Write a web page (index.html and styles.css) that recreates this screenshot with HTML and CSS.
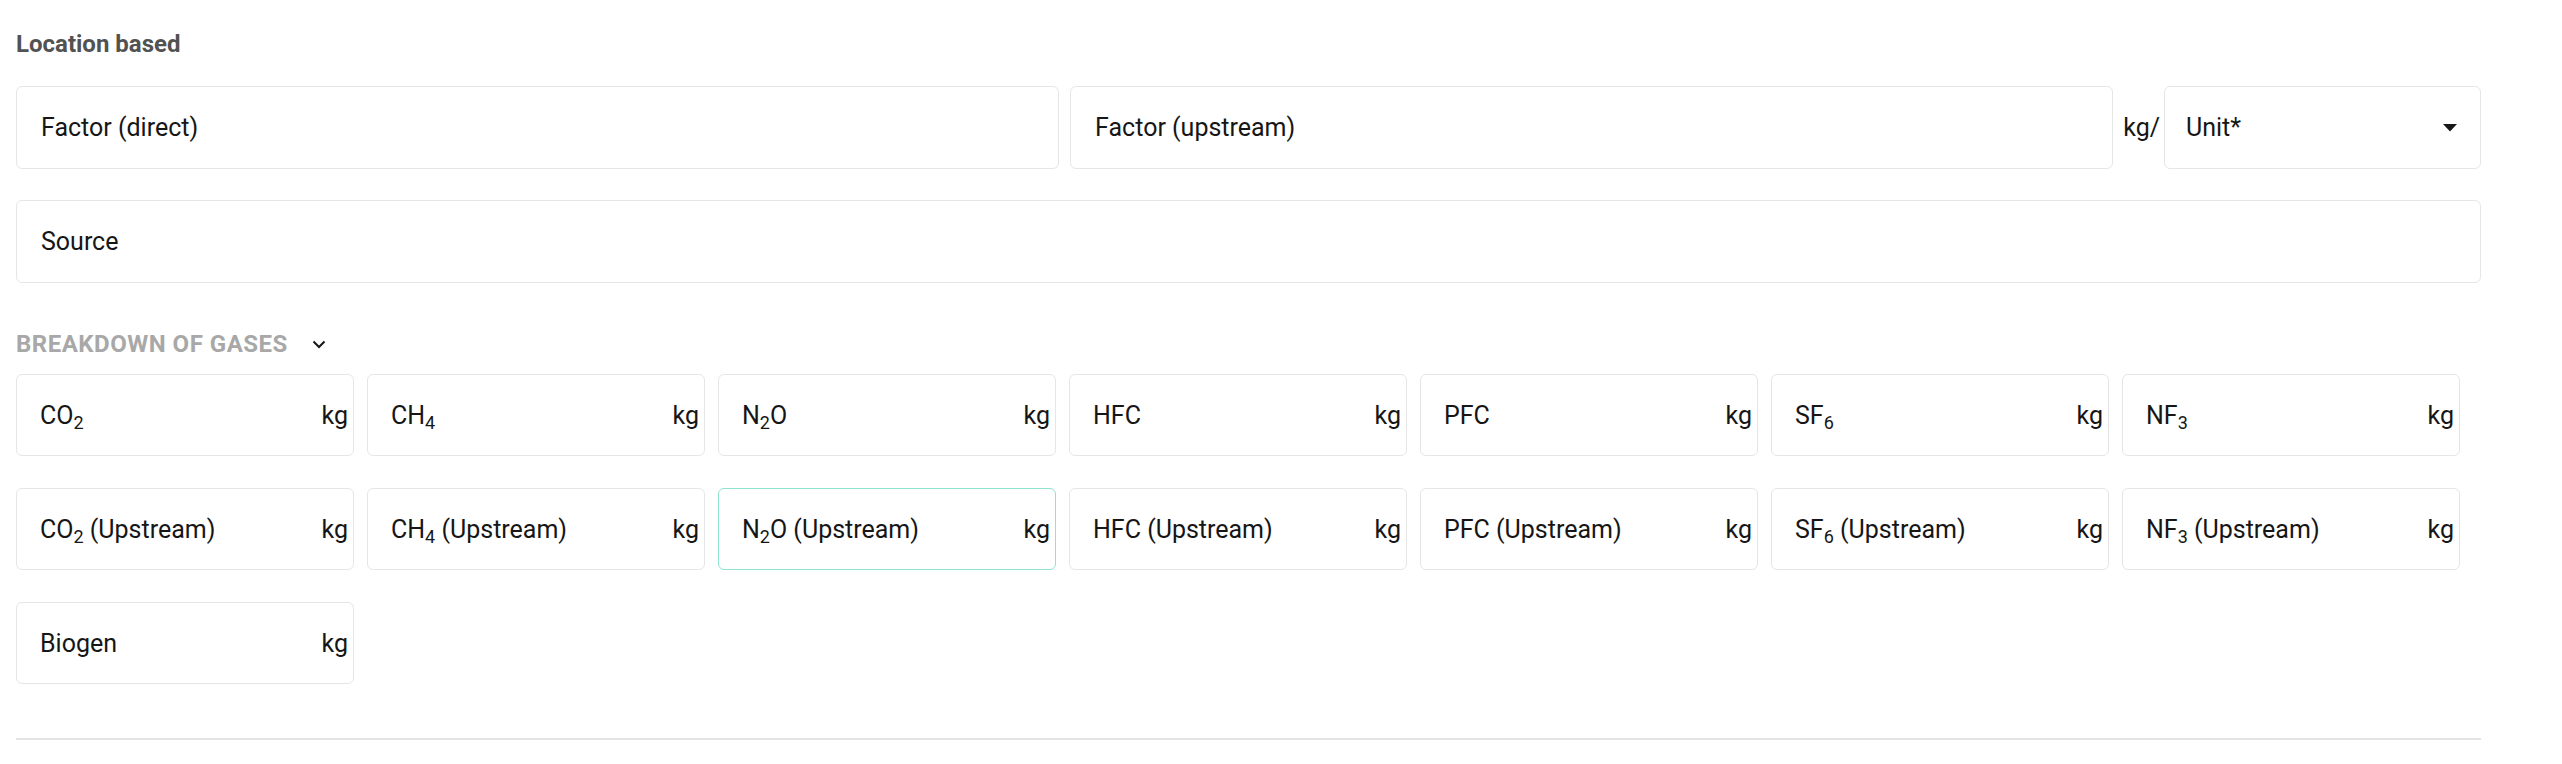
FILE: index.html
```html
<!DOCTYPE html>
<html lang="en">
<head>
<meta charset="utf-8">
<title>Location based</title>
<link rel="stylesheet" href="styles.css">
</head>
<body>
<div class="page">
  <h2 class="title">Location based</h2>

  <div class="row-top">
    <div class="field grow"><span class="label">Factor (direct)</span></div>
    <div class="field grow"><span class="label">Factor (upstream)</span></div>
    <span class="per">kg/</span>
    <div class="field select">
      <span class="label">Unit*</span>
      <svg class="caret" width="14" height="8" viewBox="0 0 14 8"><path d="M0 0 H14 L7 7.5 Z" fill="#161616"/></svg>
    </div>
  </div>

  <div class="field source"><span class="label">Source</span></div>

  <div class="section-head">
    <span class="section-title">Breakdown of gases</span>
    <svg class="chev" width="14" height="9" viewBox="0 0 14 9"><path d="M1.5 1.5 L7 7 L12.5 1.5" fill="none" stroke="#161616" stroke-width="2"/></svg>
  </div>

  <div class="gases">
    <div class="field gas"><span class="label">CO<sub>2</sub></span><span class="unit">kg</span></div>
    <div class="field gas"><span class="label">CH<sub>4</sub></span><span class="unit">kg</span></div>
    <div class="field gas"><span class="label">N<sub>2</sub>O</span><span class="unit">kg</span></div>
    <div class="field gas"><span class="label">HFC</span><span class="unit">kg</span></div>
    <div class="field gas"><span class="label">PFC</span><span class="unit">kg</span></div>
    <div class="field gas"><span class="label">SF<sub>6</sub></span><span class="unit">kg</span></div>
    <div class="field gas"><span class="label">NF<sub>3</sub></span><span class="unit">kg</span></div>

    <div class="field gas"><span class="label">CO<sub>2</sub> (Upstream)</span><span class="unit">kg</span></div>
    <div class="field gas"><span class="label">CH<sub>4</sub> (Upstream)</span><span class="unit">kg</span></div>
    <div class="field gas focused"><span class="label">N<sub>2</sub>O (Upstream)</span><span class="unit">kg</span></div>
    <div class="field gas"><span class="label">HFC (Upstream)</span><span class="unit">kg</span></div>
    <div class="field gas"><span class="label">PFC (Upstream)</span><span class="unit">kg</span></div>
    <div class="field gas"><span class="label">SF<sub>6</sub> (Upstream)</span><span class="unit">kg</span></div>
    <div class="field gas"><span class="label">NF<sub>3</sub> (Upstream)</span><span class="unit">kg</span></div>

    <div class="field gas"><span class="label">Biogen</span><span class="unit">kg</span></div>
  </div>

  <div class="divider"></div>
</div>
</body>
</html>
```

FILE: styles.css
```css
* { box-sizing: border-box; }

html, body {
  margin: 0;
  padding: 0;
  background: #ffffff;
}

body {
  font-family: Roboto, "Liberation Sans", Arial, sans-serif;
  color: #161616;
}

.page {
  width: 2481px;
  padding: 28px 0 0 16px;
}

.title {
  margin: 0;
  font-size: 24px;
  line-height: 32px;
  font-weight: 700;
  color: #525252;
}

.row-top {
  display: flex;
  align-items: center;
  margin-top: 26px;
}

.field {
  height: 83px;
  border: 1px solid #e6e6e6;
  border-radius: 6px;
  background: #ffffff;
  display: flex;
  align-items: center;
  padding: 0 24px;
  font-size: 25px;
  line-height: 1;
}

.grow {
  flex: 1 1 0;
}

.row-top .grow + .grow {
  margin-left: 11px;
}

.per {
  font-size: 25px;
  margin: 0 4px 0 10px;
}

.select {
  width: 317px;
  justify-content: space-between;
  padding: 0 23px 0 21px;
}

.caret {
  display: block;
}

.source {
  margin-top: 31px;
}

.section-head {
  display: flex;
  align-items: center;
  height: 32px;
  margin-top: 45px;
}

.section-title {
  font-size: 24px;
  font-weight: 700;
  text-transform: uppercase;
  color: #a8a8a8;
  letter-spacing: 0.5px;
}

.chev {
  display: block;
  margin-left: 24px;
}

.gases {
  display: grid;
  grid-template-columns: repeat(7, 338px);
  column-gap: 13px;
  row-gap: 32px;
  margin-top: 14px;
}

.gas {
  height: 82px;
  justify-content: space-between;
  padding: 0 5px 0 23px;
}

.focused {
  border-color: #8fe3cf;
}

.label sub {
  font-size: 0.72em;
  vertical-align: -0.25em;
  line-height: 0;
}

.divider {
  height: 2px;
  background: #e3e3e3;
  margin-top: 54px;
}
```
